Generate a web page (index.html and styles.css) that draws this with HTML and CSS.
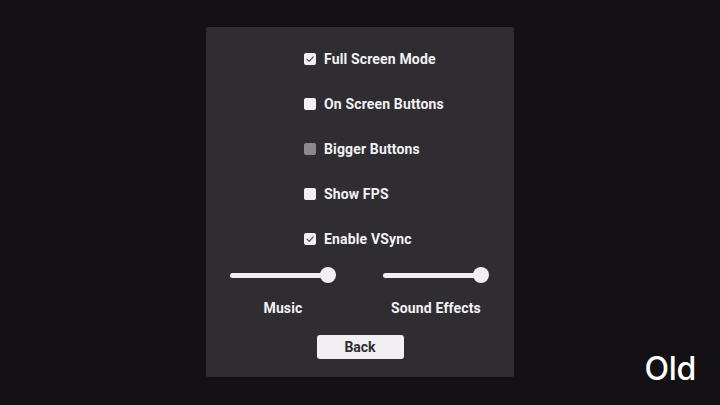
FILE: index.html
```html
<!DOCTYPE html>
<html>
<head>
<meta charset="utf-8">
<link rel="stylesheet" href="styles.css">
</head>
<body>
<div class="screen">
  <div class="panel">
    <div class="options">
      <div class="row"><span class="box checked"><svg viewBox="0 0 12 12"><path d="M3 6.2 L5.2 8.4 L9.2 3.8" /></svg></span><span class="label">Full Screen Mode</span></div>
      <div class="row"><span class="box"></span><span class="label">On Screen Buttons</span></div>
      <div class="row"><span class="box disabled"></span><span class="label">Bigger Buttons</span></div>
      <div class="row"><span class="box"></span><span class="label">Show FPS</span></div>
      <div class="row"><span class="box checked"><svg viewBox="0 0 12 12"><path d="M3 6.2 L5.2 8.4 L9.2 3.8" /></svg></span><span class="label">Enable VSync</span></div>
    </div>
    <div class="sliders">
      <div class="slider-col">
        <div class="slider"><div class="track"></div><div class="thumb"></div></div>
        <div class="slabel">Music</div>
      </div>
      <div class="slider-col">
        <div class="slider"><div class="track"></div><div class="thumb"></div></div>
        <div class="slabel">Sound Effects</div>
      </div>
    </div>
    <div class="btn-row"><button class="back">Back</button></div>
  </div>
  <div class="tag">Old</div>
</div>
</body>
</html>
```
FILE: styles.css
```css
html, body {
  margin: 0;
  padding: 0;
  background: #131114;
}
.screen {
  position: relative;
  width: 720px;
  height: 405px;
  display: flex;
  justify-content: center;
  align-items: flex-start;
  font-family: Roboto, "Liberation Sans", sans-serif;
}
.panel {
  margin-top: 27px;
  width: 308px;
  height: 350px;
  box-sizing: border-box;
  background: #2f2d31;
  border-radius: 2px;
  padding: 22px 24px 0 24px;
  display: flex;
  flex-direction: column;
}
.options {
  display: flex;
  flex-direction: column;
  gap: 25px;
  padding-left: 74px;
}
.row {
  display: flex;
  align-items: center;
  height: 20px;
  gap: 8px;
}
.box {
  width: 12px;
  height: 12px;
  border-radius: 2px;
  background: #f1eff3;
  display: flex;
}
.box svg {
  width: 12px;
  height: 12px;
}
.box svg path {
  fill: none;
  stroke: #545257;
  stroke-width: 1.2;
  stroke-linecap: round;
  stroke-linejoin: round;
}
.box.disabled {
  background: #8b898d;
}
.label {
  color: #f3f1f5;
  font-weight: 700;
  font-size: 14px;
  letter-spacing: 0.15px;
}
.sliders {
  margin-top: 18px;
  display: flex;
  gap: 47px;
}
.slider-col {
  width: 106px;
  display: flex;
  flex-direction: column;
  align-items: center;
}
.slider {
  width: 106px;
  height: 16px;
  display: flex;
  align-items: center;
}
.track {
  flex: 1;
  height: 5px;
  background: #f1eff3;
  border-radius: 3px;
  margin-right: -8px;
}
.thumb {
  width: 16px;
  height: 16px;
  border-radius: 50%;
  background: #f1eff3;
  position: relative;
}
.slabel {
  margin-top: 16px;
  color: #f3f1f5;
  font-weight: 700;
  font-size: 14px;
  line-height: 18px;
  letter-spacing: 0.15px;
}
.btn-row {
  margin-top: 18px;
  display: flex;
  justify-content: center;
}
.back {
  width: 87px;
  height: 24px;
  border: none;
  border-radius: 3px;
  background: #f1eff3;
  color: #2f2d31;
  font-family: Roboto, "Liberation Sans", sans-serif;
  font-weight: 700;
  font-size: 14px;
  padding: 0;
}
.tag {
  position: absolute;
  right: 24px;
  bottom: 20px;
  color: #ffffff;
  font-family: Inter, "Liberation Sans", sans-serif;
  font-weight: 500;
  font-size: 32px;
  line-height: 32px;
  letter-spacing: -0.3px;
}
```
